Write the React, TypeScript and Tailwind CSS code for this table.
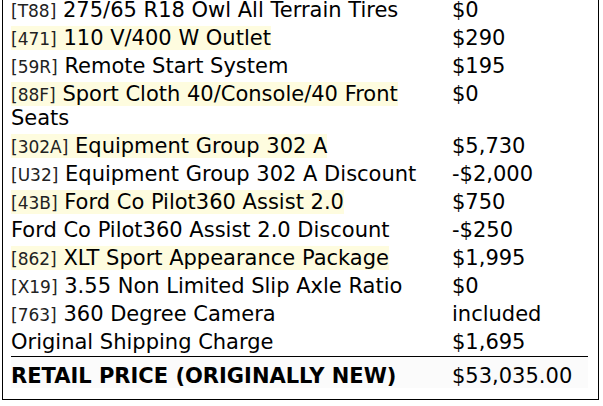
import React from 'react';

interface Option {
  code?: string;
  name: string;
  price: string;
  highlight?: boolean;
}

const OPTIONS: Option[] = [
  { code: 'T88', name: '275/65 R18 Owl All Terrain Tires', price: '$0' },
  { code: '471', name: '110 V/400 W Outlet', price: '$290', highlight: true },
  { code: '59R', name: 'Remote Start System', price: '$195' },
  { code: '88F', name: 'Sport Cloth 40/Console/40 Front Seats', price: '$0', highlight: true },
  { code: '302A', name: 'Equipment Group 302 A', price: '$5,730', highlight: true },
  { code: 'U32', name: 'Equipment Group 302 A Discount', price: '-$2,000' },
  { code: '43B', name: 'Ford Co Pilot360 Assist 2.0', price: '$750', highlight: true },
  { name: 'Ford Co Pilot360 Assist 2.0 Discount', price: '-$250' },
  { code: '862', name: 'XLT Sport Appearance Package', price: '$1,995', highlight: true },
  { code: 'X19', name: '3.55 Non Limited Slip Axle Ratio', price: '$0' },
  { code: '763', name: '360 Degree Camera', price: 'included' },
  { name: 'Original Shipping Charge', price: '$1,695' },
];

const App: React.FC = () => {
  return (
    <div className="w-[603px] h-[406px] overflow-hidden bg-white">
      <div
        className="mt-[-4px] ml-[2px] w-[597px] border-x border-b border-black px-[8px] pb-[11px] text-[21px] leading-[24px] text-black"
        style={{ fontFamily: '"DejaVu Sans", sans-serif' }}
      >
        {OPTIONS.map(opt => (
          <div key={opt.name} className="grid grid-cols-[441px_1fr] py-[2px]">
            {/* only the first line of a highlighted option gets the yellow wash */}
            <div className={opt.highlight ? 'first-line:bg-[#fefcdf]' : ''}>
              {opt.code && <span className="text-[17px] leading-none text-[#222]">[{opt.code}]</span>}
              {opt.code && ' '}
              {opt.name}
            </div>
            <div>{opt.price}</div>
          </div>
        ))}
        <div className="grid grid-cols-[441px_1fr] border-t border-black bg-[#fbfbfb] pt-[7px] mr-[2px]">
          <div className="font-bold">RETAIL PRICE (ORIGINALLY NEW)</div>
          <div>$53,035.00</div>
        </div>
      </div>
    </div>
  );
};

export default App;
